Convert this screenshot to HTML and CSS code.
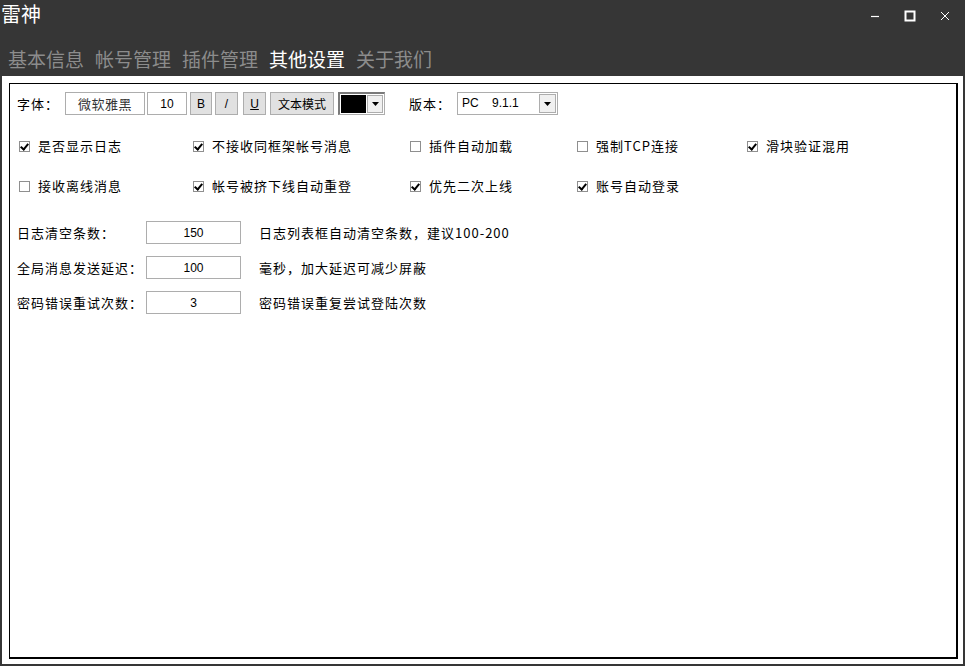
FILE: index.html
```html
<!DOCTYPE html>
<html lang="zh-CN">
<head>
<meta charset="utf-8">
<link rel="stylesheet" href="styles.css">
</head>
<body>
<div class="window">
  <div class="titlebar">
    <div class="title">雷神</div>
    <div class="winctl">
      <span class="wbtn"><svg width="12" height="12" viewBox="0 0 12 12"><path d="M2 6.5H10" stroke="#fff" stroke-width="1.2"/></svg></span>
      <span class="wbtn"><svg width="12" height="12" viewBox="0 0 12 12"><rect x="1.5" y="1.5" width="9" height="9" fill="none" stroke="#fff" stroke-width="2"/></svg></span>
      <span class="wbtn"><svg width="12" height="12" viewBox="0 0 12 12"><path d="M2 2L10 10M10 2L2 10" stroke="#fff" stroke-width="1"/></svg></span>
    </div>
  </div>
  <div class="tabs">
    <span class="tab">基本信息</span>
    <span class="tab">帐号管理</span>
    <span class="tab">插件管理</span>
    <span class="tab active">其他设置</span>
    <span class="tab">关于我们</span>
  </div>
  <div class="frame">
    <div class="panel">
      <div class="fontrow">
        <span class="lbl">字体：</span>
        <span class="box fontname">微软雅黑</span>
        <span class="box fontsize">10</span>
        <span class="btn b-b">B</span>
        <span class="btn b-i">/</span>
        <span class="btn b-u"><u>U</u></span>
        <span class="btn b-mode">文本模式</span>
        <span class="colorpick"><span class="swatch"></span><span class="arrow"><svg width="7" height="4" viewBox="0 0 7 4"><path d="M0 0H7L3.5 4Z" fill="#000"/></svg></span></span>
        <span class="lbl ver">版本：</span>
        <span class="select"><span class="seltext">PC&nbsp;&nbsp;&nbsp;&nbsp;9.1.1</span><span class="selarrow"><svg width="7" height="4" viewBox="0 0 7 4"><path d="M0 0H7L3.5 4Z" fill="#000"/></svg></span></span>
      </div>

      <div class="checks">
        <label class="chk"><span class="cb on"></span>是否显示日志</label>
        <label class="chk"><span class="cb on"></span>不接收同框架帐号消息</label>
        <label class="chk"><span class="cb"></span>插件自动加载</label>
        <label class="chk"><span class="cb"></span>强制TCP连接</label>
        <label class="chk"><span class="cb on"></span>滑块验证混用</label>
        <label class="chk"><span class="cb"></span>接收离线消息</label>
        <label class="chk"><span class="cb on"></span>帐号被挤下线自动重登</label>
        <label class="chk"><span class="cb on"></span>优先二次上线</label>
        <label class="chk"><span class="cb on"></span>账号自动登录</label>
      </div>

      <div class="fields">
        <div class="field"><span class="flabel">日志清空条数：</span><span class="input">150</span><span class="desc">日志列表框自动清空条数，建议100-200</span></div>
        <div class="field"><span class="flabel">全局消息发送延迟：</span><span class="input">100</span><span class="desc">毫秒，加大延迟可减少屏蔽</span></div>
        <div class="field"><span class="flabel">密码错误重试次数：</span><span class="input">3</span><span class="desc">密码错误重复尝试登陆次数</span></div>
      </div>
    </div>
  </div>
</div>
</body>
</html>
```

FILE: styles.css
```css
* { box-sizing: border-box; }
html, body { margin: 0; padding: 0; }
body {
  font-family: "Noto Sans CJK SC", "Noto Sans", "Liberation Sans", sans-serif;
  background: #363636;
}
.window {
  width: 965px;
  height: 666px;
  background: #363636;
  display: flex;
  flex-direction: column;
}
.titlebar {
  height: 32px;
  display: flex;
  justify-content: space-between;
  align-items: flex-start;
}
.title {
  color: #fff;
  font-size: 20px;
  line-height: 26px;
  padding-top: 1px;
  padding-left: 1px;
}
.winctl {
  display: flex;
  padding-top: 10px;
  padding-right: 14px;
  gap: 23px;
}
.wbtn { width: 12px; height: 12px; display: block; }
.wbtn svg { display: block; }
.tabs {
  height: 44px;
  display: flex;
  align-items: flex-end;
  gap: 11px;
  padding-left: 8px;
  padding-bottom: 4px;
}
.tab {
  font-size: 19px;
  line-height: 26px;
  color: #8c8c8c;
}
.tab.active { color: #fff; }
.frame {
  flex: 1;
  margin: 0 2px 2px 2px;
  background: #fff;
  padding: 7px 5px 5px 7px;
  display: flex;
}
.panel {
  flex: 1;
  border-top: 1px solid #000;
  border-left: 1px solid #000;
  border-right: 2px solid #000;
  border-bottom: 2px solid #000;
  padding: 8px 0 0 7px;
  font-size: 13px;
  letter-spacing: 1px;
  color: #000;
}
.fontrow {
  display: flex;
  align-items: center;
  height: 23px;
}
.lbl { width: 48px; line-height: 23px; }
.lbl.ver { width: 48px; margin-left: 24px; }
.box {
  height: 23px;
  border: 1px solid #adadad;
  display: flex;
  align-items: center;
  justify-content: center;
  background: #fff;
}
.fontname { width: 80px; color: #333; letter-spacing: 0.5px; }
.fontsize { width: 40px; margin-left: 2px; letter-spacing: 0; font-family: "Liberation Sans", sans-serif; font-size: 12px; }
.btn {
  height: 23px;
  border: 1px solid #adadad;
  background: #e1e1e1;
  display: flex;
  align-items: center;
  justify-content: center;
  font-family: "Liberation Sans", "Noto Sans CJK SC", sans-serif;
  font-size: 12px;
  letter-spacing: 0;
}
.b-b { width: 22px; margin-left: 3px; }
.b-i { width: 23px; margin-left: 3px; }
.b-u { width: 23px; margin-left: 5px; }
.b-mode { width: 64px; margin-left: 4px; font-family: "Noto Sans CJK SC", sans-serif; }
.colorpick {
  width: 47px;
  height: 23px;
  margin-left: 4px;
  border: 1px solid #adadad;
  border-left: 2px solid #7a7a7a;
  border-top: 2px solid #7a7a7a;
  display: flex;
  align-items: stretch;
  padding: 1px;
  background: #fff;
}
.swatch { width: 25px; background: #000; }
.arrow {
  flex: 1;
  display: flex;
  align-items: center;
  justify-content: center;
  border: 1px solid #adadad;
  margin-left: 1px;
  background: #f0f0f0;
}
.arrow svg, .selarrow svg { display: block; }
.select {
  width: 101px;
  height: 23px;
  border: 1px solid #adadad;
  display: flex;
  align-items: stretch;
  padding: 1px;
}
.seltext {
  flex: 1;
  font-family: "Liberation Sans", sans-serif;
  font-size: 12px;
  line-height: 19px;
  padding-left: 3px;
  letter-spacing: 0;
}
.selarrow {
  width: 17px;
  border: 1px solid #adadad;
  background: #f0f0f0;
  display: flex;
  align-items: center;
  justify-content: center;
}
.checks {
  display: grid;
  grid-template-columns: 174px 217px 167px 170px 160px;
  grid-auto-rows: 20px;
  row-gap: 20px;
  margin-top: 21px;
  padding-left: 2px;
}
.chk {
  display: flex;
  align-items: center;
  line-height: 20px;
  white-space: nowrap;
}
.cb {
  width: 11px;
  height: 11px;
  border: 1px solid #8f8f8f;
  margin-right: 8px;
  position: relative;
  flex: none;
}
.cb.on::after {
  content: "";
  position: absolute;
  left: 2px;
  top: 0px;
  width: 3px;
  height: 6px;
  border-right: 2px solid #000;
  border-bottom: 2px solid #000;
  transform: rotate(40deg);
}
.fields {
  margin-top: 25px;
  display: flex;
  flex-direction: column;
  gap: 12px;
}
.field {
  display: flex;
  align-items: center;
  height: 23px;
}
.flabel { width: 129px; white-space: nowrap; }
.input {
  width: 95px;
  height: 23px;
  border: 1px solid #adadad;
  display: flex;
  align-items: center;
  justify-content: center;
  font-family: "Liberation Sans", sans-serif;
  font-size: 12px;
  letter-spacing: 0;
}
.desc { margin-left: 18px; }
```
